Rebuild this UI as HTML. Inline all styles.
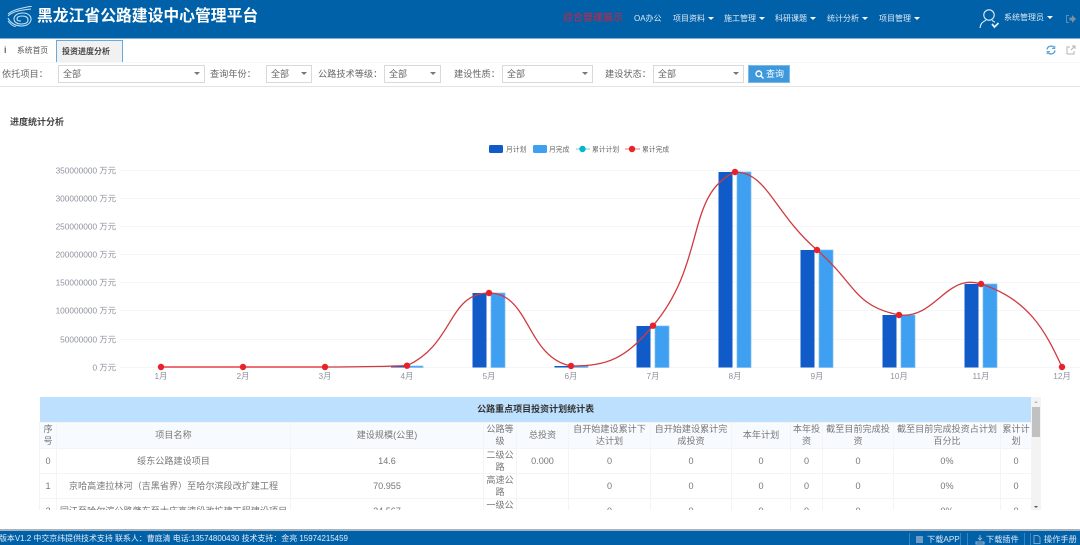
<!DOCTYPE html>
<html lang="zh-CN">
<head>
<meta charset="utf-8">
<title>黑龙江省公路建设中心管理平台</title>
<style>
*{box-sizing:border-box}
html,body{margin:0;padding:0;width:1080px;height:545px;overflow:hidden;background:#fff;font-family:"Liberation Sans","Noto Sans CJK SC",sans-serif;color:#666}
body{filter:blur(.3px)}
.a{position:absolute;white-space:nowrap}
#hd{position:absolute;left:0;top:0;width:1080px;height:39px;background:#0060a8;border-bottom:1px solid #7fb2da}
.nav{position:absolute;top:14px;font-size:8px;line-height:10px;color:#dfeaf5;white-space:nowrap}
.nav i{display:inline-block;width:0;height:0;border-left:3px solid transparent;border-right:3px solid transparent;border-top:3px solid #fff;margin-left:3px;vertical-align:1px}
.lab{position:absolute;top:68px;font-size:9.2px;line-height:12px;color:#666;white-space:nowrap}
.sel{position:absolute;top:65px;height:18px;border:1px solid #d9d9d9;background:#fff;font-size:9px;line-height:16px;color:#666;padding-left:4px}
.sel:after{content:"";position:absolute;right:4px;top:6px;border-left:3px solid transparent;border-right:3px solid transparent;border-top:3px solid #777}
#tb{position:absolute;left:39px;top:397px;width:992px;height:113px;overflow:hidden}
table{border-collapse:collapse;table-layout:fixed;width:992px;font-size:9.1px;color:#777}
td{padding:0 1px;text-align:center;line-height:12px;border:1px solid #f3f4f6;overflow:hidden;vertical-align:middle}
.tt td{height:25px;background:#bde0fe;font-weight:bold;color:#333;border:0;font-size:9px}
.th td{height:26px;background:#f7fbff}
.r td{height:25px}
#ft{position:absolute;left:0;top:529px;width:1080px;height:16px;background:#0060a8;border-top:2px solid #a7b3bd}
.fb{position:absolute;top:2px;height:14px;border-left:1px solid #3c83bb;font-size:8.2px;line-height:14px;color:#dfe9f3;white-space:nowrap}
svg text{font-family:"Liberation Sans","Noto Sans CJK SC",sans-serif}
</style>
</head>
<body>
<div id="hd">
<svg class="a" style="left:7px;top:6px" width="25" height="21" viewBox="0 0 25 21" fill="none" stroke="#c4e3f5" stroke-width="1.100">
<path d="M1 8C7 3 16 2 25 0"/>
<path d="M1 10C6 5 15 4 24 3"/>
<path d="M1 12c2 5 8 8 13 8 5 0 9-2 10-6 .5-4-3-7-8-7-6 0-9 3-9 6 0 3 3 5 7 5 4 0 7-1 7-4s-3-4-6-4-5 1-5 3 2 2 4 2"/>
<path d="M1 15c2 3 5 5 8 6" stroke-width=".9"/>
</svg>
<div class="a" style="left:37px;top:7px;font-size:15.8px;line-height:20px;font-weight:bold;color:#fff">黑龙江省公路建设中心管理平台</div>
<div class="nav" style="left:563px;top:12px;font-size:10px;line-height:13px;color:#d0233f">综合管理展示</div>
<div class="nav" style="left:634px">OA办公</div>
<div class="nav" style="left:673px">项目资料<i></i></div>
<div class="nav" style="left:724px">施工管理<i></i></div>
<div class="nav" style="left:775px">科研课题<i></i></div>
<div class="nav" style="left:827px">统计分析<i></i></div>
<div class="nav" style="left:879px">项目管理<i></i></div>
<svg class="a" style="left:979px;top:8px" width="22" height="21" viewBox="0 0 22 21" fill="none" stroke="#e4eef6" stroke-width="1.100">
<circle cx="10" cy="7" r="5.200"/>
<path d="M1 20c.5-4.500 3.500-6.800 6-7.600M13 12.500c1 .4 2 1 2.800 1.800"/>
<path d="M13 16l2.500 3 4-4" stroke-width="1.800"/>
</svg>
<div class="nav" style="left:1004px;top:13px">系统管理员<i></i></div>
<svg class="a" style="left:1066px;top:14px" width="10" height="10" viewBox="0 0 10 10"><path d="M0 1h3v1H1v6h2v1H0z" fill="#5d8fb8"/><path d="M3.500 3.500H6V1l4 4-4 4V6.500H3.500z" fill="#7a8f9f"/></svg>
</div>

<div class="a" style="left:0;top:62px;width:1080px;height:25px;background:#fff;border-top:1px solid #f7f7f7;border-bottom:1px solid #e3e3e3"></div>
<div class="a" style="left:4px;top:45px;font-size:9px;line-height:10px;font-weight:bold;color:#666">i</div>
<div class="a" style="left:17px;top:45px;font-size:7.800px;line-height:11px;color:#555">系统首页</div>
<div class="a" style="left:56px;top:40px;width:67px;height:22px;background:#f1f1f1;border:1px solid #69a9dc;border-bottom:0"></div>
<div class="a" style="left:62px;top:46px;font-size:8px;line-height:11px;font-weight:bold;color:#444">投资进度分析</div>
<svg class="a" style="left:1046px;top:45px" width="10" height="10" viewBox="0 0 10 10" fill="none" stroke="#5aa2da" stroke-width="1.400"><path d="M1 4.500A4 4 0 0 1 8 2.500M9 5.500A4 4 0 0 1 2 7.500"/><path d="M8.800 .8v2.700H6.100M1.200 9.200V6.500h2.700" stroke-width="1"/></svg>
<svg class="a" style="left:1066px;top:45px" width="10" height="10" viewBox="0 0 10 10" fill="none" stroke="#b3b3b3" stroke-width="1"><path d="M4 2H1v7h7V6M5 5l4-4M6 1h3v3"/></svg>

<div class="lab" style="left:2px">依托项目：</div>
<div class="sel" style="left:58px;width:147px">全部</div>
<div class="lab" style="left:210px">查询年份：</div>
<div class="sel" style="left:266px;width:46px">全部</div>
<div class="lab" style="left:318px">公路技术等级：</div>
<div class="sel" style="left:384px;width:57px">全部</div>
<div class="lab" style="left:454px">建设性质：</div>
<div class="sel" style="left:502px;width:91px">全部</div>
<div class="lab" style="left:605px">建设状态：</div>
<div class="sel" style="left:653px;width:91px">全部</div>
<div class="a" style="left:748px;top:65px;width:42px;height:18px;background:#3d98dc;border:1px solid #7db9e6;font-size:9px;line-height:16px;color:#fff;padding-left:17px">查询</div>
<svg class="a" style="left:755px;top:70px" width="9" height="9" viewBox="0 0 9 9" fill="none" stroke="#fff" stroke-width="1.400"><circle cx="3.800" cy="3.800" r="2.800"/><path d="M6 6l2.500 2.500"/></svg>

<div class="a" style="left:10px;top:116px;font-size:9px;line-height:12px;font-weight:bold;color:#444">进度统计分析</div>

<svg class="a" style="left:0;top:135px" width="1080" height="250" viewBox="0 135 1080 250">
<g stroke="#f4f5f7" stroke-width="1">
<path d="M120 170.500H1080M120 198.500H1080M120 226.500H1080M120 254.500H1080M120 282.500H1080M120 310.500H1080M120 339.500H1080M120 367.500H1080"/>
</g>
<g font-size="8.300" fill="#8f93a0" text-anchor="end">
<text x="116" y="173.500">350000000 万元</text>
<text x="116" y="201.500">300000000 万元</text>
<text x="116" y="229.500">250000000 万元</text>
<text x="116" y="257.500">200000000 万元</text>
<text x="116" y="285.500">150000000 万元</text>
<text x="116" y="313.500">100000000 万元</text>
<text x="116" y="342.500">50000000 万元</text>
<text x="116" y="370.500">0 万元</text>
</g>
<g font-size="8.300" fill="#8f93a0" text-anchor="middle">
<text x="161" y="379">1月</text><text x="243" y="379">2月</text><text x="325" y="379">3月</text><text x="407" y="379">4月</text><text x="489" y="379">5月</text><text x="571" y="379">6月</text><text x="653" y="379">7月</text><text x="735" y="379">8月</text><text x="817" y="379">9月</text><text x="899" y="379">10月</text><text x="981" y="379">11月</text><text x="1062" y="379">12月</text>
</g>
<g fill="#115bc8">
<rect x="391" y="366" width="15" height="1.500"/>
<rect x="472.500" y="293" width="14" height="74.500"/>
<rect x="554.500" y="366" width="15" height="1.500"/>
<rect x="636.500" y="326" width="14" height="41.500"/>
<rect x="718.500" y="172" width="14" height="195.500"/>
<rect x="800.500" y="250" width="14" height="117.500"/>
<rect x="882.500" y="315" width="14" height="52.500"/>
<rect x="964.500" y="284" width="14" height="83.500"/>
</g>
<g fill="#3f9ff0" stroke="#7cbdf2" stroke-width=".7">
<rect x="408" y="366" width="15" height="1.500"/>
<rect x="491" y="293" width="14" height="74.500"/>
<rect x="573" y="366" width="15" height="1.500"/>
<rect x="655" y="326" width="14" height="41.500"/>
<rect x="737" y="172" width="14" height="195.500"/>
<rect x="819" y="250" width="14" height="117.500"/>
<rect x="901" y="315" width="14" height="52.500"/>
<rect x="983" y="284" width="14" height="83.500"/>
</g>
<path d="M161 367H325" stroke="#e81c24" stroke-width="1.200" fill="none"/>
<path d="M325 367C366 366.700 372 367 407 365.700C454 344.500 448 293 489 293C530 293 526 357 571 366C608 366 625 359 653 325.700C707 262 685 195 735 172C767 172 774 213 817 250C856 284 854 306 899 315C936 319 946 273 981 284C1028 299 1045 330 1062 367" stroke="#cf3a40" stroke-width="1.300" fill="none"/>
<g fill="#e8222a">
<circle cx="161" cy="367" r="3.200"/><circle cx="243" cy="367" r="3.200"/><circle cx="325" cy="367" r="3.200"/><circle cx="407" cy="365.700" r="3.200"/><circle cx="489" cy="293" r="3.200"/><circle cx="571" cy="366" r="3.200"/><circle cx="653" cy="325.700" r="3.200"/><circle cx="735" cy="172" r="3.200"/><circle cx="817" cy="250" r="3.200"/><circle cx="899" cy="315" r="3.200"/><circle cx="981" cy="284" r="3.200"/><circle cx="1062" cy="367" r="3.200"/>
</g>
<rect x="489" y="145" width="14" height="8" rx="1.500" fill="#115bc8"/>
<rect x="533" y="145" width="14" height="8" rx="1.500" fill="#3f9ff0"/>
<path d="M576 149H590" stroke="#6fd3dd" stroke-width="1"/><circle cx="582.500" cy="149" r="3.200" fill="#05b5c8"/>
<path d="M625 149H640" stroke="#e8787c" stroke-width="1"/><circle cx="632" cy="149" r="3.200" fill="#e8222a"/>
<g font-size="6.800" fill="#666">
<text x="506" y="151.500">月计划</text><text x="549" y="151.500">月完成</text><text x="592" y="151.500">累计计划</text><text x="642" y="151.500">累计完成</text>
</g>
</svg>

<div id="tb">
<table>
<colgroup><col style="width:17px"><col style="width:234px"><col style="width:193px"><col style="width:33px"><col style="width:52px"><col style="width:82px"><col style="width:81px"><col style="width:59px"><col style="width:32px"><col style="width:71px"><col style="width:107px"><col style="width:31px"></colgroup>
<tr class="tt"><td colspan="12">公路重点项目投资计划统计表</td></tr>
<tr class="th"><td>序号</td><td>项目名称</td><td>建设规模(公里)</td><td>公路等级</td><td>总投资</td><td>自开始建设累计下达计划</td><td>自开始建设累计完成投资</td><td>本年计划</td><td>本年投资</td><td>截至目前完成投资</td><td>截至目前完成投资占计划百分比</td><td>累计计划</td></tr>
<tr class="r"><td>0</td><td>绥东公路建设项目</td><td>14.6</td><td>二级公路</td><td>0.000</td><td>0</td><td>0</td><td>0</td><td>0</td><td>0</td><td>0%</td><td>0</td></tr>
<tr class="r"><td>1</td><td>京哈高速拉林河（吉黑省界）至哈尔滨段改扩建工程</td><td>70.955</td><td>高速公路</td><td></td><td>0</td><td>0</td><td>0</td><td>0</td><td>0</td><td>0%</td><td>0</td></tr>
<tr class="r"><td>2</td><td>同江至哈尔滨公路肇东至大庆高速段改扩建工程建设项目</td><td>24.567</td><td>一级公路</td><td></td><td>0</td><td>0</td><td>0</td><td>0</td><td>0</td><td>0%</td><td>0</td></tr>
</table>
</div>
<div class="a" style="left:1031px;top:397px;width:10px;height:113px;background:#f3f3f3"></div>
<div class="a" style="left:1032px;top:407px;width:8px;height:30px;background:#c1c1c1"></div>
<div class="a" style="left:1034px;top:401px;border-left:2px solid transparent;border-right:2px solid transparent;border-bottom:2px solid #bbb"></div>
<div class="a" style="left:1034px;top:506px;border-left:2px solid transparent;border-right:2px solid transparent;border-top:2px solid #555"></div>

<div id="ft">
<div class="a" style="left:-1px;top:1px;font-size:7.950px;line-height:14px;color:#e4edf6">版本V1.2 中交京纬提供技术支持 联系人：曹庭清 电话:13574800430 技术支持：金亮 15974215459</div>
<div class="fb" style="left:909px;width:52px;border-right:1px solid #3c83bb;padding-left:17px">下载APP</div>
<div class="fb" style="left:967px;width:58px;border-right:1px solid #3c83bb;padding-left:18px">下载插件</div>
<div class="fb" style="left:1030px;width:50px;padding-left:13px">操作手册</div>
<svg class="a" style="left:916px;top:4px" width="160" height="10" viewBox="0 0 160 10"><rect x="0" y="1" width="7" height="7" fill="#6f9cc2"/><path d="M60 7h8v2h-8zM64 0v5M62 3l2 2 2-2" stroke="#9cb6cc" fill="none"/><path d="M118 .5h4l2 2v6h-6z" fill="none" stroke="#7fa4c4"/></svg>
</div>
</body>
</html>
